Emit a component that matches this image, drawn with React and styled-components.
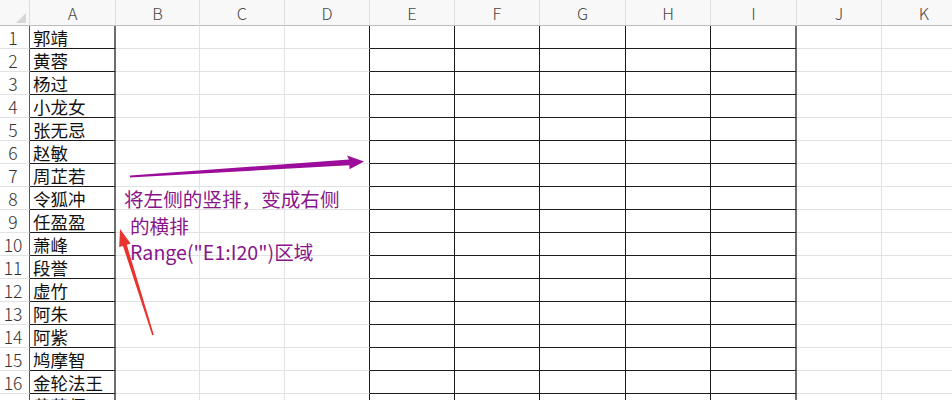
import React from 'react'
import styled, { createGlobalStyle } from 'styled-components'

const GlobalStyle = createGlobalStyle`
  html, body {
    margin: 0;
    padding: 0;
    background: #fff;
  }
`

const COLS = [
  { l: 'A', w: 86, right: '2px solid #6e6e6e', bottom: '1px solid #1c1c1c' },
  { l: 'B', w: 84 },
  { l: 'C', w: 85 },
  { l: 'D', w: 85, right: '1px solid #1c1c1c' },
  { l: 'E', w: 85, right: '1px solid #1c1c1c', bottom: '1px solid #1c1c1c' },
  { l: 'F', w: 85, right: '1px solid #1c1c1c', bottom: '1px solid #1c1c1c' },
  { l: 'G', w: 86, right: '1px solid #1c1c1c', bottom: '1px solid #1c1c1c' },
  { l: 'H', w: 85, right: '1px solid #1c1c1c', bottom: '1px solid #1c1c1c' },
  { l: 'I', w: 86, right: '2px solid #6e6e6e', bottom: '1px solid #1c1c1c' },
  { l: 'J', w: 85 },
  { l: 'K', w: 85 },
]

const NAMES = ['郭靖', '黄蓉', '杨过', '小龙女', '张无忌', '赵敏', '周芷若', '令狐冲', '任盈盈', '萧峰', '段誉', '虚竹', '阿朱', '阿紫', '鸠摩智', '金轮法王', '黄药师']

const GRID_LINE = '1px solid #e2e2e2'

const Sheet = styled.div`
  position: relative;
  width: 952px;
  height: 400px;
  overflow: hidden;
  font-family: "Noto Sans CJK SC", "Noto Sans", sans-serif;
`

const Grid = styled.div`
  display: grid;
  grid-template-columns: 30px ${COLS.map(c => c.w + 'px').join(' ')};
  grid-template-rows: 26px repeat(${NAMES.length}, 23px);
`

const Corner = styled.div`
  position: relative;
  box-sizing: border-box;
  background: #f8f8f8;
  border-bottom: 1px solid #bdbdbd;
  border-right: 1px solid #dedede;
  &::after {
    content: '';
    position: absolute;
    right: 3px;
    bottom: 2px;
    width: 0;
    height: 0;
    border-left: 10px solid transparent;
    border-bottom: 10px solid #d6d6d6;
  }
`

const ColHead = styled.div`
  box-sizing: border-box;
  background: #f8f8f8;
  border-bottom: 1px solid #bdbdbd;
  border-right: 1px solid #dedede;
  display: flex;
  align-items: center;
  justify-content: center;
  font-size: 16.5px;
  color: #4a4a4a;
  font-weight: 300;
`

const RowHead = styled.div`
  box-sizing: border-box;
  border-bottom: ${GRID_LINE};
  border-right: 1px solid #555;
  display: flex;
  align-items: center;
  justify-content: center;
  padding-right: 3px;
  font-size: 17.5px;
  color: #333;
  font-weight: 300;
`

const Cell = styled.div`
  box-sizing: border-box;
  border-right: ${p => p.$right || GRID_LINE};
  border-bottom: ${p => p.$bottom || GRID_LINE};
  display: flex;
  align-items: center;
  padding-left: 3px;
  font-size: 17.5px;
  color: #111;
  white-space: nowrap;
  overflow: hidden;
`

const Note = styled.div`
  position: absolute;
  left: 124px;
  top: 186px;
  color: #88168a;
  font-size: 19.6px;
  line-height: 26.7px;
  white-space: nowrap;
`

const NoteLine = styled.div`
  padding-left: ${p => (p.$indent ? '6px' : '0')};
`

const Arrows = styled.svg`
  position: absolute;
  left: 0;
  top: 0;
  pointer-events: none;
`

export default function App() {
  return (
    <>
      <GlobalStyle />
      <Sheet>
        <Grid>
          <Corner />
          {COLS.map(c => <ColHead key={c.l}>{c.l}</ColHead>)}
          {NAMES.map((name, r) => (
            <React.Fragment key={r}>
              <RowHead>{r + 1}</RowHead>
              {COLS.map((c, i) => (
                <Cell key={c.l} $right={c.right} $bottom={c.bottom}>
                  {i === 0 ? name : null}
                </Cell>
              ))}
            </React.Fragment>
          ))}
        </Grid>

        <Arrows width="952" height="400" viewBox="0 0 952 400">
          {/* purple: column -> row */}
          <polygon
            fill="#9c0d9c"
            points="130,175.6 349,159.4 347,155.4 364,161.6 349.5,169.2 349.3,165.2 130,177.4"
          />
          {/* red: pointing up at column A */}
          <polygon
            fill="#e8332e"
            points="153.8,334.8 126.8,244.7 130.6,243.6 120,229 119.2,247 123,245.9 152.2,335.2"
          />
        </Arrows>

        <Note>
          <NoteLine>将左侧的竖排，变成右侧</NoteLine>
          <NoteLine $indent>的横排</NoteLine>
          <NoteLine $indent>Range("E1:I20")区域</NoteLine>
        </Note>
      </Sheet>
    </>
  )
}
